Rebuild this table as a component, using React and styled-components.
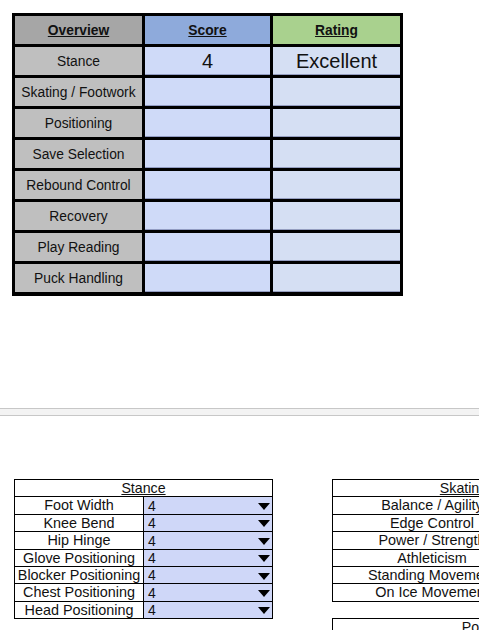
import React from "react";
import styled, { createGlobalStyle } from "styled-components";

const Global = createGlobalStyle`
  html, body { margin: 0; padding: 0; background: #fff; overflow: hidden; }
  body { font-family: "Liberation Sans", Arial, sans-serif; color: #111; }
`;

const Page = styled.div`
  width: 479px;
  height: 630px;
  overflow: hidden;
  display: flex;
  flex-direction: column;
  & > * { flex: none; }
`;

const TopSection = styled.div`
  padding: 13px 0 0 12px;
  height: 408px;
  box-sizing: border-box;
`;

const OverviewGrid = styled.div`
  display: grid;
  grid-template-columns: 127px 125px 127px;
  grid-auto-rows: 28px;
  gap: 3px;
  padding: 3px 3px 4px 3px;
  background: #000;
  width: max-content;
`;

const Cell = styled.div`
  display: flex;
  align-items: center;
  justify-content: center;
  background: ${(p) => p.$bg};
  font-size: ${(p) => p.$size || 13.8}px;
  font-weight: ${(p) => (p.$head ? 700 : 400)};
  text-decoration: ${(p) => (p.$head ? "underline" : "none")};
  color: #111;
  box-shadow: ${(p) => (p.$shade ? "inset 0 -1px 0 rgba(70, 80, 130, 0.45)" : "none")};
  white-space: nowrap;
`;

const Divider = styled.div`
  height: 6px;
  border-top: 1px solid #c7c7c7;
  border-bottom: 1px solid #c7c7c7;
  background: #f3f3f3;
  width: 100%;
`;

const BottomSection = styled.div`
  display: flex;
  align-items: flex-start;
  gap: 59px;
  padding: 63px 0 0 14px;
`;

const SheetTable = styled.div`
  flex: none;
  display: grid;
  grid-template-columns: ${(p) => p.$cols};
  grid-auto-rows: 16.4px;
  gap: 1px;
  background: #000;
  border: 1px solid #000;
  width: max-content;
`;

const SheetHead = styled.div`
  grid-column: 1 / -1;
  background: #fff;
  text-align: center;
  font-size: 14.2px;
  line-height: 17px;
  text-decoration: underline;
  white-space: nowrap;
`;

const SheetLabel = styled.div`
  background: #fff;
  text-align: center;
  font-size: 14.4px;
  line-height: 17px;
  white-space: nowrap;
  overflow: hidden;
`;

const SheetValue = styled.div`
  background: #cfd7f8;
  display: flex;
  align-items: flex-end;
  justify-content: space-between;
  padding: 0 2px 0 4px;
  font-size: 14px;
  line-height: 15px;
`;

const Arrow = styled.svg`
  align-self: center;
  margin-top: 2px;
`;

const RightColumn = styled.div`
  display: flex;
  flex-direction: column;
  gap: 16px;
  flex: none;
`;

const overviewRows = [
  ["Stance", "4", "Excellent"],
  ["Skating / Footwork", "", ""],
  ["Positioning", "", ""],
  ["Save Selection", "", ""],
  ["Rebound Control", "", ""],
  ["Recovery", "", ""],
  ["Play Reading", "", ""],
  ["Puck Handling", "", ""],
];

const stanceRows = [
  "Foot Width",
  "Knee Bend",
  "Hip Hinge",
  "Glove Positioning",
  "Blocker Positioning",
  "Chest Positioning",
  "Head Positioning",
];

const skatingRows = [
  "Balance / Agility",
  "Edge Control",
  "Power / Strength",
  "Athleticism",
  "Standing Movement",
  "On Ice Movement",
];

function Dropdown() {
  return (
    <Arrow width="12" height="7" viewBox="0 0 12 7">
      <polygon points="0,0 12,0 6,7" fill="#000" />
    </Arrow>
  );
}

function Sheet({ title, rows, cols }) {
  return (
    <SheetTable $cols={cols}>
      <SheetHead>{title}</SheetHead>
      {rows.map((r) => (
        <React.Fragment key={r}>
          <SheetLabel>{r}</SheetLabel>
          <SheetValue>
            <span>4</span>
            <Dropdown />
          </SheetValue>
        </React.Fragment>
      ))}
    </SheetTable>
  );
}

export default function App() {
  return (
    <Page>
      <Global />
      <TopSection>
        <OverviewGrid>
          <Cell $bg="#a6a6a6" $head>Overview</Cell>
          <Cell $bg="#8eaadb" $head>Score</Cell>
          <Cell $bg="#a9d18e" $head>Rating</Cell>
          {overviewRows.map(([label, score, rating]) => (
            <React.Fragment key={label}>
              <Cell $bg="#bfbfbf">{label}</Cell>
              <Cell $bg="#cfdaf8" $shade $size={20}>{score}</Cell>
              <Cell $bg="#d5dff3" $shade $size={20}>{rating}</Cell>
            </React.Fragment>
          ))}
        </OverviewGrid>
      </TopSection>
      <Divider />
      <BottomSection>
        <Sheet title="Stance" rows={stanceRows} cols="128px 128px" />
        <RightColumn>
          <Sheet title="Skating" rows={skatingRows} cols="198px 62px" />
          <Sheet title="Positioning" rows={["Angles", "Depth"]} cols="198px 128px" />
        </RightColumn>
      </BottomSection>
    </Page>
  );
}
